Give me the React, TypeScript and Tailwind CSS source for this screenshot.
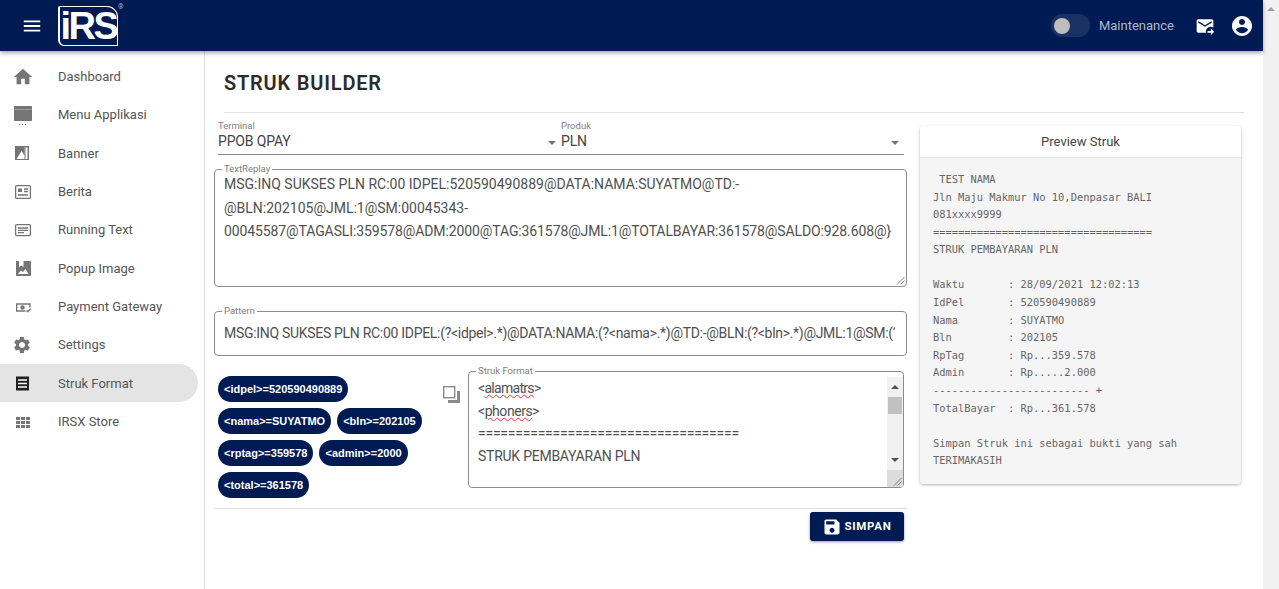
import { useState } from 'react';

const navy = 'bg-[#001a54]';

function Svg({ d, className }: { d: string; className: string }) {
  return (
    <svg viewBox="0 0 24 24" className={className} fill="currentColor">
      <path d={d} />
    </svg>
  );
}

const icons = {
  menu: 'M3 18h18v-2H3v2zm0-5h18v-2H3v2zm0-7v2h18V6H3z',
  home: 'M10 20v-6h4v6h5v-8h3L12 3 2 12h3v8z',
  settings:
    'M19.14 12.94c.04-.3.06-.61.06-.94 0-.32-.02-.64-.07-.94l2.03-1.58c.18-.14.23-.41.12-.61l-1.92-3.32c-.12-.22-.37-.29-.59-.22l-2.39.96c-.5-.38-1.03-.7-1.62-.94l-.36-2.54c-.04-.24-.24-.41-.48-.41h-3.84c-.24 0-.43.17-.47.41l-.36 2.54c-.59.24-1.13.57-1.62.94l-2.39-.96c-.22-.08-.47 0-.59.22L2.74 8.87c-.12.21-.08.47.12.61l2.03 1.58c-.05.3-.09.63-.09.94s.02.64.07.94l-2.03 1.58c-.18.14-.23.41-.12.61l1.92 3.32c.12.22.37.29.59.22l2.39-.96c.5.38 1.03.7 1.62.94l.36 2.54c.05.24.24.41.48.41h3.84c.24 0 .44-.17.47-.41l.36-2.54c.59-.24 1.13-.56 1.62-.94l2.39.96c.22.08.47 0 .59-.22l1.92-3.32c.12-.22.07-.47-.12-.61l-2.01-1.58zM12 15.6c-1.98 0-3.6-1.62-3.6-3.6s1.62-3.6 3.6-3.6 3.6 1.62 3.6 3.6-1.62 3.6-3.6 3.6z',
  account:
    'M12 2C6.48 2 2 6.48 2 12s4.48 10 10 10 10-4.48 10-10S17.52 2 12 2zm0 3c1.66 0 3 1.34 3 3s-1.34 3-3 3-3-1.34-3-3 1.34-3 3-3zm0 14.2c-2.5 0-4.71-1.28-6-3.22.03-1.99 4-3.08 6-3.08 1.99 0 5.97 1.09 6 3.08-1.29 1.94-3.5 3.22-6 3.22z',
  inbox:
    'M20 4H4c-1.1 0-2 .9-2 2v12c0 1.1.9 2 2 2h9.1c-.1-.3-.1-.7-.1-1 0-3.3 2.7-6 6-6 1.1 0 2.1.3 3 .8V6c0-1.1-.9-2-2-2zm0 4l-8 5-8-5V6l8 5 8-5v2zm-1 7l4 4-4 4v-3h-4v-2h4v-3z',
  save: 'M17 3H5c-1.11 0-2 .9-2 2v14c0 1.1.89 2 2 2h14c1.1 0 2-.9 2-2V7l-4-4zm-5 16c-1.66 0-3-1.34-3-3s1.34-3 3-3 3 1.34 3 3-1.34 3-3 3zm3-10H5V5h10v4z',
};

function NavIcon({ name }: { name: string }) {
  const cls = 'w-[22px] h-[22px]';
  if (name === 'home') return <Svg d={icons.home} className={cls} />;
  if (name === 'settings') return <Svg d={icons.settings} className="w-[20px] h-[20px]" />;
  if (name === 'apps')
    return (
      <svg viewBox="0 0 22 22" className={cls} fill="currentColor">
        <path d="M4 6h4v3H4zM9 6h4v3H9zM14 6h4v3h-4zM4 10h4v3H4zM9 10h4v3H9zM14 10h4v3h-4zM4 14h4v3H4zM9 14h4v3H9zM14 14h4v3h-4z" />
      </svg>
    );
  if (name === 'menu')
    return (
      <svg viewBox="0 0 22 22" className={cls} fill="currentColor">
        <path d="M3 2h16c.6 0 1 .4 1 1v13c0 .6-.4 1-1 1H3c-.6 0-1-.4-1-1V3c0-.6.4-1 1-1z" />
        <path d="M2 5h18v.6H2z" fill="#bdbdbd" />
        <path d="M7 20h1v1H7zM10 20h1v1h-1zM13 20h1v1h-1z" />
      </svg>
    );
  if (name === 'banner')
    return (
      <svg viewBox="0 0 22 22" className={cls} fill="currentColor">
        <path d="M3 4h14v14H3z" />
        <path d="M4.500 17L9.500 9l3 4.500V5.500h3V17z" fill="#fff" />
        <path d="M12.500 5.500h1V17h-1z" />
      </svg>
    );
  if (name === 'berita')
    return (
      <svg viewBox="0 0 22 22" className={cls} fill="none" stroke="currentColor" strokeWidth="1.3">
        <rect x="3.6" y="4.6" width="14.8" height="12.8" rx="1" />
        <path d="M6 7.5h4v3.5H6z" fill="currentColor" stroke="none" />
        <path d="M12 8h4M12 10.5h4M6 14h10" />
      </svg>
    );
  if (name === 'text')
    return (
      <svg viewBox="0 0 22 22" className={cls} fill="none" stroke="currentColor" strokeWidth="1.3">
        <rect x="3.6" y="5.6" width="14.8" height="11" rx="1" />
        <path d="M6 9h10M6 11.3h10M6 13.6h6" />
      </svg>
    );
  if (name === 'popup')
    return (
      <svg viewBox="0 0 22 22" className={cls} fill="currentColor">
        <path d="M4 3h13c.6 0 1 .4 1 1v13c0 .6-.4 1-1 1H4c-.6 0-1-.4-1-1V4c0-.6.4-1 1-1z" transform="translate(1 1)" />
        <path d="M7 4h4.500v6L9.250 8.500 7 10z" fill="#fff" />
        <path d="M6 17l3-3.500 2 1.500 2.500-3 3 5z" fill="#fff" />
      </svg>
    );
  if (name === 'pay')
    return (
      <svg viewBox="0 0 22 22" className={cls} fill="none" stroke="currentColor" strokeWidth="1.4">
        <path d="M13.500 15H4.700V8h13.300v3.500" />
        <circle cx="10.500" cy="11.500" r="2.200" fill="currentColor" stroke="none" />
        <path d="M14.500 14.500l1.300 1.300 2.800-3" />
      </svg>
    );
  return (
    <svg viewBox="0 0 22 22" className={cls}>
      <path d="M4 4.500h13v14H4z" fill="#212121" />
      <path d="M6 8h9M6 11.500h9M6 15h9" stroke="#fff" strokeWidth="1.400" />
    </svg>
  );
}

const nav = [
  { label: 'Dashboard', icon: 'home' },
  { label: 'Menu Applikasi', icon: 'menu' },
  { label: 'Banner', icon: 'banner' },
  { label: 'Berita', icon: 'berita' },
  { label: 'Running Text', icon: 'text' },
  { label: 'Popup Image', icon: 'popup' },
  { label: 'Payment Gateway', icon: 'pay' },
  { label: 'Settings', icon: 'settings' },
  { label: 'Struk Format', icon: 'struk', active: true },
  { label: 'IRSX Store', icon: 'apps' },
];

const chips = [
  '<idpel>=520590490889',
  '<nama>=SUYATMO',
  '<bln>=202105',
  '<rptag>=359578',
  '<admin>=2000',
  '<total>=361578',
];

const receipt = ` TEST NAMA
Jln Maju Makmur No 10,Denpasar BALI
081xxxx9999
===================================
STRUK PEMBAYARAN PLN

Waktu       : 28/09/2021 12:02:13
IdPel       : 520590490889
Nama        : SUYATMO
Bln         : 202105
RpTag       : Rp...359.578
Admin       : Rp.....2.000
------------------------- +
TotalBayar  : Rp...361.578

Simpan Struk ini sebagai bukti yang sah
TERIMAKASIH`;

function Grip() {
  return (
    <svg viewBox="0 0 10 10" className="absolute right-[1px] bottom-[1px] w-[9px] h-[9px]" stroke="#666" strokeWidth="0.900">
      <path d="M1 9.500L9.500 1M5 9.500L9.500 5" />
    </svg>
  );
}

function SelectBox({ label, value }: { label: string; value: string }) {
  return (
    <div className="flex-1 border-b border-[#8c8c8c] h-[35px] relative">
      <div className="text-[9.500px] leading-[12px] text-[#808080]">{label}</div>
      <div className="text-[14px] leading-[20px] text-[#444] tracking-[-0.150px] mt-[-1px]">{value}</div>
      <svg viewBox="0 0 8 4" className="absolute right-[5px] top-[21px] w-[8px] h-[4px] text-[#757575]" fill="currentColor">
        <path d="M0 0h8L4 4z" />
      </svg>
    </div>
  );
}

export default function App() {
  const [pattern] = useState('MSG:INQ SUKSES PLN RC:00 IDPEL:(?<idpel>.*)@DATA:NAMA:(?<nama>.*)@TD:-@BLN:(?<bln>.*)@JML:1@SM:(?<sm>.*)@TAGASLI');

  return (
    <div className="flex h-[589px] overflow-hidden bg-white font-['Roboto',sans-serif]">
      <div className="flex-1 flex flex-col min-w-0">
        <header className={`${navy} h-[51px] flex items-center shadow-[0_2px_4px_rgba(0,0,0,0.35)] relative z-10 shrink-0`}>
          <div className="w-[58px] flex justify-center pl-[6px] text-white">
            <Svg d={icons.menu} className="w-[22px] h-[22px]" />
          </div>
          <div className="relative w-[60px] h-[40px] border border-white border-l-2 rounded-tr-[11px] rounded-bl-[6px] rounded-tl-[2px] flex items-center justify-center overflow-hidden">
            <span className="font-['Liberation_Sans',sans-serif] font-bold text-white text-[38px] leading-none tracking-[-2.500px]">iRS</span>
          </div>
          <span className="self-start mt-[4px] text-[7px] text-[#aab2c8] leading-none">®</span>
          <div className="ml-auto flex items-center">
            <div className="w-[39px] h-[23px] rounded-full bg-white/10 flex items-center pl-[3px]">
              <div className="w-[16px] h-[16px] rounded-full bg-[#bdbdbd]" />
            </div>
            <span className="ml-[9px] text-[13px] text-[#b0b8ce]">Maintenance</span>
            <Svg d={icons.inbox} className="ml-[21px] w-[20px] h-[20px] text-white" />
            <Svg d={icons.account} className="ml-[15px] mr-[9px] w-[24px] h-[24px] text-white" />
          </div>
        </header>

        <div className="flex flex-1 min-h-0">
          <aside className="w-[205px] shrink-0 border-r border-[#dedede] pt-[6.500px] pr-[6px]">
            {nav.map((item) => (
              <div
                key={item.label}
                className={`h-[38.330px] flex items-center rounded-r-full ${item.active ? 'bg-[#e4e4e4]' : ''}`}
              >
                <div className={`w-[46px] pl-[12px] flex justify-start ${item.active ? 'text-[#212121]' : 'text-[#757575]'}`}>
                  <NavIcon name={item.icon} />
                </div>
                <span className="ml-[12px] text-[13px] text-[#555]">{item.label}</span>
              </div>
            ))}
          </aside>

          <main className="flex-1 min-w-0">
            <div className="mx-[19px] pt-[20px] pb-[17px] border-b border-[#e0e0e0]">
              <h1 className="text-[20px] leading-[24px] font-semibold tracking-[0.800px] text-[#2b2b2b]">STRUK BUILDER</h1>
            </div>

            <div className="flex ml-[9px] gap-[13px] mt-[7px]">
              <div className="w-[693px] shrink-0">
                <div className="flex mx-[4px] mr-[3px]">
                  <SelectBox label="Terminal" value="PPOB QPAY" />
                  <SelectBox label="Produk" value="PLN" />
                </div>

                <fieldset className="mt-[8px] h-[124px] border border-[#8c8c8c] rounded-[4px] px-[9px] relative">
                  <legend className="text-[9.500px] leading-[12px] text-[#808080] px-[2px] ml-[-2px]">TextReplay</legend>
                  <div className="text-[14px] leading-[23.500px] text-[#505050] mt-[-2px]">
                    MSG:INQ SUKSES PLN RC:00 IDPEL:520590490889@DATA:NAMA:SUYATMO@TD:-
                    <br />
                    @BLN:202105@JML:1@SM:00045343-
                    <br />
                    <span className="tracking-[-0.110px]">{'00045587@TAGASLI:359578@ADM:2000@TAG:361578@JML:1@TOTALBAYAR:361578@SALDO:928.608@}'}</span>
                  </div>
                  <Grip />
                </fieldset>

                <fieldset className="mt-[18px] h-[51px] border border-[#8c8c8c] rounded-[4px] pl-[9px] pr-[11px]">
                  <legend className="text-[9.500px] leading-[12px] text-[#808080] px-[2px] ml-[-2px]">Pattern</legend>
                  <input
                    readOnly
                    value={pattern}
                    className="w-full h-[32px] text-[14px] tracking-[-0.300px] text-[#505050] outline-none bg-transparent"
                  />
                </fieldset>

                <div className="flex mt-[9px] mr-[3px]">
                  <div className="w-[229px] pl-[4px] pt-[11px] flex flex-wrap content-start gap-[6px] shrink-0">
                    {chips.map((chip) => (
                      <span
                        key={chip}
                        className={`${navy} h-[26px] rounded-full px-[6px] flex items-center text-white text-[11px] font-bold font-['Liberation_Sans',sans-serif]`}
                      >
                        {chip}
                      </span>
                    ))}
                  </div>
                  <svg viewBox="0 0 17 17" className="mt-[21px] w-[17px] h-[17px] text-[#8a8a8a] shrink-0" fill="none">
                    <rect x="0.700" y="0.700" width="11" height="11" stroke="currentColor" strokeWidth="1.400" />
                    <path d="M14 5h3v12H5v-3h9z" fill="currentColor" />
                  </svg>
                  <fieldset className="ml-[8px] flex-1 h-[123px] border border-[#8c8c8c] rounded-[4px] pl-[9px]">
                    <legend className="text-[9.500px] leading-[12px] text-[#808080] px-[2px] ml-[-2px]">Struk Format</legend>
                    <div className="flex h-[110px]">
                      <div className="flex-1 text-[14px] leading-[22.500px] text-[#505050] overflow-hidden">
                        <div className="tracking-[-0.700px]">&lt;<span className="underline decoration-wavy decoration-red-500 decoration-1">alamatrs</span>&gt;</div>
                        <div className="tracking-[-0.450px]">&lt;<span className="underline decoration-wavy decoration-red-500 decoration-1">phoners</span>&gt;</div>
                        <div className="tracking-[-0.230px]">===================================</div>
                        <div className="tracking-[-0.250px]">STRUK PEMBAYARAN PLN</div>
                      </div>
                      <div className="w-[16px] shrink-0 flex flex-col bg-[#f1f1f1] relative">
                        <div className="h-[20px] flex items-center justify-center">
                          <svg viewBox="0 0 8 4" className="w-[8px] h-[4px] text-[#505050]" fill="currentColor">
                            <path d="M0 4h8L4 0z" />
                          </svg>
                        </div>
                        <div className="mx-[1px] h-[17px] bg-[#c1c1c1]" />
                        <div className="flex-1 flex items-end justify-center pb-[8px]">
                          <svg viewBox="0 0 8 4" className="w-[8px] h-[4px] text-[#505050]" fill="currentColor">
                            <path d="M0 0h8L4 4z" />
                          </svg>
                        </div>
                        <div className="h-[17px] bg-[#dcdcdc] relative">
                          <Grip />
                        </div>
                      </div>
                    </div>
                  </fieldset>
                </div>

                <div className="mt-[10px] border-t border-[#e0e0e0] pt-[3px] pr-[3px] flex justify-end">
                  <button className={`${navy} h-[29px] w-[94px] rounded-[3px] flex items-center justify-center gap-[2px] text-white text-[11.500px] font-bold tracking-[0.700px] shadow-[0_1px_3px_rgba(0,0,0,0.4)]`}>
                    <Svg d={icons.save} className="w-[20px] h-[20px]" />
                    SIMPAN
                  </button>
                </div>
              </div>

              <section className="w-[321px] shrink-0 mt-[6px] h-[358px] rounded-[4px] shadow-[0_1px_3px_rgba(0,0,0,0.3)] overflow-hidden flex flex-col">
                <div className="h-[32px] flex items-center justify-center border-b border-[#e6e6e6] bg-white text-[13px] text-[#444]">
                  Preview Struk
                </div>
                <pre className="flex-1 bg-[#f5f5f5] pl-[13px] pt-[13px] font-['DejaVu_Sans_Mono',monospace] text-[10.400px] leading-[17.580px] text-[#666]">
                  {receipt}
                </pre>
              </section>
            </div>
          </main>
        </div>
      </div>

      <div className="w-[16px] shrink-0 bg-[#f1f1f1] flex justify-center pt-[7px]">
        <svg viewBox="0 0 8 4" className="w-[8px] h-[4px] text-[#a3a3a3]" fill="currentColor">
          <path d="M0 4h8L4 0z" />
        </svg>
      </div>
    </div>
  );
}
